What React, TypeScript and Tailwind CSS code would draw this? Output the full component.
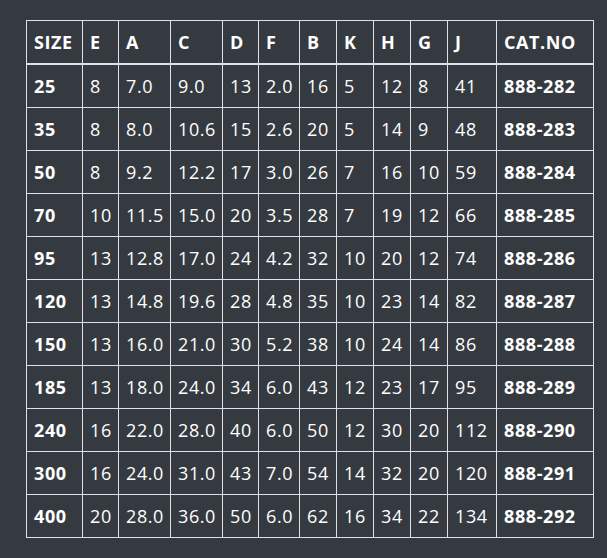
import React from 'react'

const COLS = ['SIZE', 'E', 'A', 'C', 'D', 'F', 'B', 'K', 'H', 'G', 'J', 'CAT.NO']
const WIDTHS = ['w-[56px]', 'w-[36px]', 'w-[52px]', 'w-[52px]', 'w-[36px]', 'w-[41px]', 'w-[37px]', 'w-[37px]', 'w-[37px]', 'w-[37px]', 'w-[49px]', 'w-[97px]']

const ROWS: string[][] = [
  ['25', '8', '7.0', '9.0', '13', '2.0', '16', '5', '12', '8', '41', '888-282'],
  ['35', '8', '8.0', '10.6', '15', '2.6', '20', '5', '14', '9', '48', '888-283'],
  ['50', '8', '9.2', '12.2', '17', '3.0', '26', '7', '16', '10', '59', '888-284'],
  ['70', '10', '11.5', '15.0', '20', '3.5', '28', '7', '19', '12', '66', '888-285'],
  ['95', '13', '12.8', '17.0', '24', '4.2', '32', '10', '20', '12', '74', '888-286'],
  ['120', '13', '14.8', '19.6', '28', '4.8', '35', '10', '23', '14', '82', '888-287'],
  ['150', '13', '16.0', '21.0', '30', '5.2', '38', '10', '24', '14', '86', '888-288'],
  ['185', '13', '18.0', '24.0', '34', '6.0', '43', '12', '23', '17', '95', '888-289'],
  ['240', '16', '22.0', '28.0', '40', '6.0', '50', '12', '30', '20', '112', '888-290'],
  ['300', '16', '24.0', '31.0', '43', '7.0', '54', '14', '32', '20', '120', '888-291'],
  ['400', '20', '28.0', '36.0', '50', '6.0', '62', '16', '34', '22', '134', '888-292'],
]

export default function App() {
  return (
    <div
      className="min-h-[558px] bg-[#343a40] pl-[26px] pt-[20px] text-white"
      style={{ fontFamily: '"Open Sans", "Noto Sans", sans-serif' }}
    >
      <table className="w-[568px] table-fixed border-collapse text-[18px] leading-[28px] tracking-[0.6px]">
        <colgroup>
          {WIDTHS.map((w, i) => (
            <col key={i} className={w} />
          ))}
        </colgroup>
        <thead>
          <tr>
            {COLS.map((c) => (
              <th
                key={c}
                className="border border-b-2 border-[#dee2e6] px-[7px] py-[7px] text-left align-middle font-bold"
              >
                {c}
              </th>
            ))}
          </tr>
        </thead>
        <tbody>
          {ROWS.map((row) => (
            <tr key={row[0]}>
              {row.map((v, i) => (
                <td
                  key={i}
                  className={`border border-[#dee2e6] px-[7px] py-[7px] text-left align-middle whitespace-nowrap ${
                    i === 0 || i === row.length - 1 ? 'font-bold' : 'font-normal'
                  }`}
                >
                  {v}
                </td>
              ))}
            </tr>
          ))}
        </tbody>
      </table>
    </div>
  )
}
